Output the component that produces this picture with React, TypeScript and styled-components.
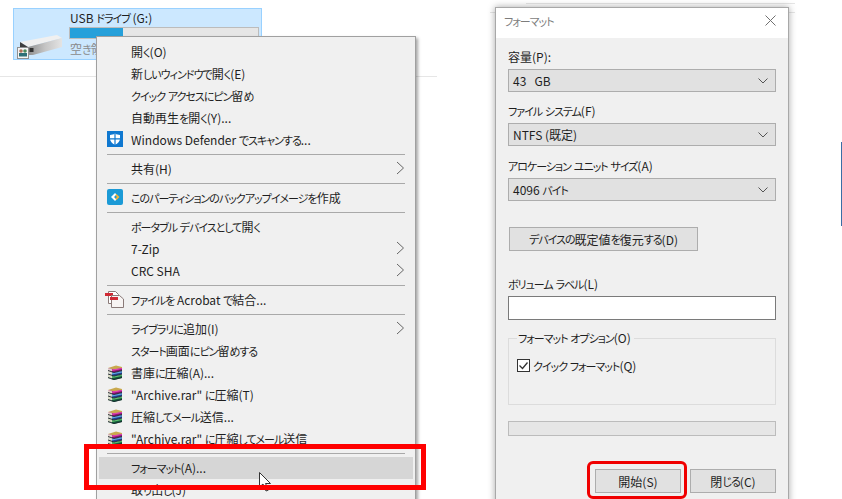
import * as React from 'react';
import styled, { createGlobalStyle } from 'styled-components';

const GlobalStyle = createGlobalStyle`
  html, body {
    margin: 0;
    padding: 0;
    background: #fff;
  }

  body {
    font-family: "Noto Sans CJK JP", "Liberation Sans", sans-serif;
    font-size: 12px;
    font-feature-settings: "palt";
    color: #1e1e1e;
  }
`;

const DivPage = styled.div`
  position: relative;
  width: 842px;
  height: 499px;
  overflow: hidden;
  background: #fff;
`;

const DivExplorer = styled.div`
  width: 437px;
  height: 77px;
  padding: 8px 0 0 13px;
  box-sizing: border-box;
  border-bottom: 1px solid #e6e6e6;
`;

const DivDriveTile = styled.div`
  width: 249px;
  height: 52px;
  box-sizing: border-box;
  display: flex;
  background: #cce8ff;
  border: 1px solid #99d1ff;
`;

const DivDriveIcon = styled.div`
  flex: 0 0 55px;
`;

const DivDriveInfo = styled.div`
  flex: 1 1 0;
`;

const DivDriveName = styled.div`
  padding-left: 1px;
  line-height: 18px;
`;

const DivDriveBar = styled.div`
  width: 188px;
  height: 10px;
  border: 1px solid #bcbcbc;
  background: #e6e6e6;
`;

const DivDriveBarFill = styled.div`
  height: 100%;
  background: #26a0da;
`;

const DivDriveFree = styled.div`
  margin-top: 1px;
  padding-left: 1px;
  line-height: 18px;
  color: #8a8a8a;
`;

const DivBehindEdge = styled.div<{ $left: number, $top: number, $width: number }>`
  position: absolute;
  left: ${props => props.$left}px;
  top: ${props => props.$top}px;
  width: ${props => props.$width}px;
  height: 1px;
  background: #e6e6e6;
`;

const DivContextMenu = styled.div`
  position: absolute;
  left: 96px;
  top: 36px;
  width: 320px;
  height: 480px;
  box-sizing: border-box;
  padding: 4px 2px;
  background: #f0f0f0;
  border: 1px solid #a0a0a0;
  box-shadow: 2px 2px 3px rgba(0, 0, 0, 0.35);
`;

const DivMenuRow = styled.div<{ $hover?: boolean }>`
  height: 22px;
  box-sizing: border-box;
  padding-bottom: 2px;
  display: flex;
  align-items: center;
  background: ${props => props.$hover ? '#d6d6d6' : 'transparent'};
`;

const DivMenuIcon = styled.div`
  flex: 0 0 32px;
  display: flex;
  justify-content: center;
  align-items: center;
`;

const SpanMenuLabel = styled.span`
  flex: 1 1 0;
  white-space: nowrap;
`;

const DivMenuArrow = styled.div`
  flex: 0 0 17px;
  display: flex;
  align-items: center;
`;

const DivMenuSeparator = styled.div`
  height: 1px;
  margin: 3px 8px;
  background: #a9a9a9;
`;

const DivDialog = styled.div`
  position: absolute;
  left: 495px;
  top: 7px;
  width: 294px;
  height: 510px;
  box-sizing: border-box;
  background: #f0f0f0;
  border: 1px solid #a8a8a8;
  box-shadow: 0 0 7px rgba(0, 0, 0, 0.35);
`;

const DivDialogTitleBar = styled.div`
  height: 30px;
  box-sizing: border-box;
  padding: 0 12px 5px 8px;
  display: flex;
  justify-content: space-between;
  align-items: center;
  background: #fff;
  color: #7d7d7d;
`;

const DivDialogBody = styled.div`
  padding: 10px 12px 0 12px;
  display: flex;
  flex-direction: column;
`;

const LabelField = styled.div`
  height: 16px;
  line-height: 18px;
  margin-bottom: 5px;
`;

const DivSelect = styled.div<{ $gap?: number }>`
  height: 23px;
  box-sizing: border-box;
  margin-bottom: ${props => props.$gap ?? 10}px;
  padding: 0 7px 0 4px;
  display: flex;
  justify-content: space-between;
  align-items: center;
  background: #e1e1e1;
  border: 1px solid #adadad;
`;

const DivButton = styled.div<{ $width: number }>`
  width: ${props => props.$width}px;
  height: 24px;
  box-sizing: border-box;
  display: flex;
  justify-content: center;
  align-items: center;
  background: #e1e1e1;
  border: 1px solid #adadad;
`;

const DivRestoreRow = styled.div`
  margin: 16px 0 24px 1px;
`;

const DivTextInput = styled.div`
  height: 24px;
  box-sizing: border-box;
  background: #fff;
  border: 1px solid #7a7a7a;
`;

const FieldsetOptions = styled.fieldset`
  height: 75px;
  box-sizing: border-box;
  margin: 10px 0 0 0;
  padding: 11px 8px 0 8px;
  border: 1px solid #dcdcdc;
`;

const LegendOptions = styled.legend`
  padding: 0 3px 0 1px;
  line-height: 16px;
`;

const LabelCheck = styled.div`
  display: flex;
  align-items: center;
  gap: 3px;
`;

const DivCheckbox = styled.div`
  width: 13px;
  height: 13px;
  box-sizing: border-box;
  display: flex;
  justify-content: center;
  align-items: center;
  background: #fff;
  border: 1px solid #333;
`;

const DivProgress = styled.div`
  height: 15px;
  box-sizing: border-box;
  margin-top: 16px;
  background: #e6e6e6;
  border: 1px solid #bcbcbc;
`;

const DivDialogButtons = styled.div`
  margin-top: 33px;
  display: flex;
  justify-content: flex-end;
  gap: 9px;
`;

const DivRedBox = styled.div`
  position: absolute;
  left: 84px;
  top: 444px;
  width: 342px;
  height: 46px;
  box-sizing: border-box;
  border: 5px solid #ff0000;
`;

const DivRedRound = styled.div`
  position: absolute;
  left: 587px;
  top: 461px;
  width: 100px;
  height: 38px;
  box-sizing: border-box;
  border: 3px solid #f00000;
  border-radius: 6px;
`;

const DivEdgeLine = styled.div`
  position: absolute;
  left: 841px;
  top: 142px;
  width: 1px;
  height: 84px;
  background: #3a6ea5;
`;

const SvgCursor = styled.svg`
  position: absolute;
  left: 259px;
  top: 472px;
`;

// The reference's UI font has much narrower kana than Noto, so kana runs get tightened
const SpanKana = styled.span`
  font-size: 11px;
  letter-spacing: -1px;
`;

const Jp = ({ text }: { text: string }) => (
  <>
    {text.split(/([\u3040-\u30ff]+)/).map((part, i) => i % 2 == 1 ? <SpanKana key={i}>{part}</SpanKana> : part)}
  </>
);

const Arrow = () => (
  <svg width="9" height="14" viewBox="0 0 9 14">
    <path d="M1 1l6.5 6L1 13" fill="none" stroke="#666" strokeWidth="1" />
  </svg>
);

const Chevron = () => (
  <svg width="10" height="6" viewBox="0 0 10 6">
    <path d="M0.5 0.5L5 5l4.5-4.5" fill="none" stroke="#555" strokeWidth="1" />
  </svg>
);

const DefenderIcon = () => (
  <svg width="16" height="16" viewBox="0 0 16 16">
    <rect width="16" height="16" fill="#0f78d0" />
    <path d="M8 2.500c1.600 1 3.400 1.400 5 1.400v3.600c0 3-2.200 5-5 6.200-2.800-1.200-5-3.200-5-6.200V3.900c1.600 0 3.400-.4 5-1.400z" fill="#fff" />
    <path d="M7.400 2.500h1.200v11.500H7.400zM2.500 7.200h11v1.200h-11z" fill="#0f78d0" />
  </svg>
);

const BackupIcon = () => (
  <svg width="16" height="16" viewBox="0 0 16 16">
    <rect width="16" height="16" rx="2" fill="#1b9ad6" />
    <path d="M8 4L4 8l4 4 1.500-1.500L7 8l2.500-2.500z" fill="#fff" />
    <path d="M9.500 5L12.500 8l-3 3-1.300-1.300L10 8 8.200 6.300z" fill="#f5b335" />
  </svg>
);

const AcrobatIcon = () => (
  <svg width="20" height="19" viewBox="0 0 20 19">
    <path d="M3.500 1.500h7l3 3v9h-10z" fill="#fff" stroke="#8a7a78" strokeWidth="1" />
    <rect x="0" y="3" width="8" height="3" fill="#d02a35" />
    <path d="M6.500 5.500h8l4 3.500v8.500h-12z" fill="#f7f4f3" stroke="#8a7a78" strokeWidth="1" />
    <rect x="5" y="7" width="8" height="3" fill="#d02a35" />
  </svg>
);

const RarIcon = () => (
  <svg width="16" height="15" viewBox="0 0 16 15">
    <path d="M1 3L9 0.500l6 1.500v1L7 4.500z" fill="#c9a94e" />
    <path d="M1 3l6 1.500L15 3v2.500L7 7.500 1 5.500z" fill="#8f1276" />
    <path d="M5 4.500l10-1.500v1L5 6z" fill="#e040b0" />
    <path d="M1 6l6 2 8-2v3l-8 2-6-2z" fill="#1d4696" />
    <path d="M5 8l10-1.500v1L5 9.500z" fill="#64a8e4" />
    <path d="M1 9.500l6 2 8-2V13l-8 2-6-2z" fill="#14603a" />
    <path d="M5 11.500l10-1.500v1L5 13z" fill="#5cc070" />
    <path d="M1 3l4 1.200v10L1 13z" fill="#ece8d4" opacity="0.9" />
    <path d="M1 5.500l6 2 8-2M1 9l6 2 8-2M1 12.500l6 2 8-2" fill="none" stroke="#1a2430" strokeWidth="0.9" />
  </svg>
);

const DriveIcon = () => (
  <svg width="55" height="50" viewBox="0 0 55 50">
    <defs>
      <linearGradient id="driveSide" x1="0" y1="0" x2="1" y2="0">
        <stop offset="0" stopColor="#8f8f8f" />
        <stop offset="0.5" stopColor="#c4c4c4" />
        <stop offset="1" stopColor="#e4e4e4" />
      </linearGradient>
    </defs>
    <path d="M6 33L43 26l5 3-34 9z" fill="#f0f0f0" />
    <path d="M6 33l8 5v8l-8-5z" fill="#3e3e3e" />
    <path d="M14 38l34-9v9l-29 8h-5z" fill="url(#driveSide)" />
    <rect x="15.500" y="39" width="4" height="4" fill="#333" />
    <rect x="3.500" y="38.500" width="11" height="11" fill="#f6f6f6" stroke="#909090" strokeWidth="1" />
    <circle cx="7" cy="42" r="1.800" fill="#b0705a" />
    <circle cx="11" cy="42" r="1.800" fill="#4c8a5c" />
    <rect x="5" y="44" width="8" height="3.500" fill="#2e7078" />
  </svg>
);

type MenuEntry =
  | { kind: 'separator' }
  | { kind: 'item', label: string, icon?: React.ReactNode, arrow?: boolean, hover?: boolean };

const item = (label: string, icon?: React.ReactNode, arrow?: boolean, hover?: boolean): MenuEntry => ({ kind: 'item', label, icon, arrow, hover });
const separator: MenuEntry = { kind: 'separator' };

const menu: MenuEntry[] = [
  item('開く(O)'),
  item('新しいウィンドウで開く(E)'),
  item('クイック アクセスにピン留め'),
  item('自動再生を開く(Y)...'),
  item('Windows Defender でスキャンする...', <DefenderIcon />),
  separator,
  item('共有(H)', undefined, true),
  separator,
  item('このパーティションのバックアップイメージを作成', <BackupIcon />),
  separator,
  item('ポータブル デバイスとして開く'),
  item('7-Zip', undefined, true),
  item('CRC SHA', undefined, true),
  separator,
  item('ファイルを Acrobat で結合...', <AcrobatIcon />),
  separator,
  item('ライブラリに追加(I)', undefined, true),
  item('スタート画面にピン留めする'),
  item('書庫に圧縮(A)...', <RarIcon />),
  item('"Archive.rar" に圧縮(T)', <RarIcon />),
  item('圧縮してメール送信...', <RarIcon />),
  item('"Archive.rar" に圧縮してメール送信', <RarIcon />),
  separator,
  item('フォーマット(A)...', undefined, false, true),
  item('取り出し(J)'),
];

export default function App() {
  return (
    <DivPage>
      <GlobalStyle />
      <DivExplorer>
        <DivDriveTile>
          <DivDriveIcon><DriveIcon /></DivDriveIcon>
          <DivDriveInfo>
            <DivDriveName><Jp text="USB ドライブ (G:)" /></DivDriveName>
            <DivDriveBar><DivDriveBarFill style={{ width: '28%' }} /></DivDriveBar>
            <DivDriveFree><Jp text="空き領域" /></DivDriveFree>
          </DivDriveInfo>
        </DivDriveTile>
      </DivExplorer>

      <DivContextMenu>
        {menu.map((entry, i) => entry.kind === 'separator'
          ? <DivMenuSeparator key={i} />
          : <DivMenuRow key={i} $hover={entry.hover}>
              <DivMenuIcon>{entry.icon}</DivMenuIcon>
              <SpanMenuLabel><Jp text={entry.label} /></SpanMenuLabel>
              {entry.arrow && <DivMenuArrow><Arrow /></DivMenuArrow>}
            </DivMenuRow>)}
      </DivContextMenu>

      <DivBehindEdge $left={526} $top={3} $width={269} />
      <DivBehindEdge $left={490} $top={12} $width={305} />

      <DivDialog>
        <DivDialogTitleBar>
          <span><Jp text="フォーマット" /></span>
          <svg width="11" height="11" viewBox="0 0 11 11">
            <path d="M0.500 0.500l10 10M10.500 0.500l-10 10" stroke="#707070" strokeWidth="1" />
          </svg>
        </DivDialogTitleBar>
        <DivDialogBody>
          <LabelField>容量(P):</LabelField>
          <DivSelect><span>43&nbsp;&nbsp;&nbsp;GB</span><Chevron /></DivSelect>
          <LabelField><Jp text="ファイル システム(F)" /></LabelField>
          <DivSelect $gap={11}><span>NTFS (既定)</span><Chevron /></DivSelect>
          <LabelField><Jp text="アロケーション ユニット サイズ(A)" /></LabelField>
          <DivSelect><span><Jp text="4096 バイト" /></span><Chevron /></DivSelect>
          <DivRestoreRow><DivButton $width={189}><Jp text="デバイスの既定値を復元する(D)" /></DivButton></DivRestoreRow>
          <LabelField><Jp text="ボリューム ラベル(L)" /></LabelField>
          <DivTextInput />
          <FieldsetOptions>
            <LegendOptions><Jp text="フォーマット オプション(O)" /></LegendOptions>
            <LabelCheck>
              <DivCheckbox>
                <svg width="11" height="11" viewBox="0 0 11 11">
                  <path d="M1.500 5.500l3 3 5-6" fill="none" stroke="#333" strokeWidth="1.300" />
                </svg>
              </DivCheckbox>
              <span><Jp text="クイック フォーマット(Q)" /></span>
            </LabelCheck>
          </FieldsetOptions>
          <DivProgress />
          <DivDialogButtons>
            <DivButton $width={86}>開始(S)</DivButton>
            <DivButton $width={86}><Jp text="閉じる(C)" /></DivButton>
          </DivDialogButtons>
        </DivDialogBody>
      </DivDialog>

      <SvgCursor width="13" height="20" viewBox="0 0 13 20">
        <path d="M0.500 0.500V15l3.500-3 3 7 2.500-1-3-6.500h5z" fill="#fff" stroke="#333" strokeWidth="1" />
      </SvgCursor>
      <DivRedBox />
      <DivRedRound />
      <DivEdgeLine />
    </DivPage>
  );
}
